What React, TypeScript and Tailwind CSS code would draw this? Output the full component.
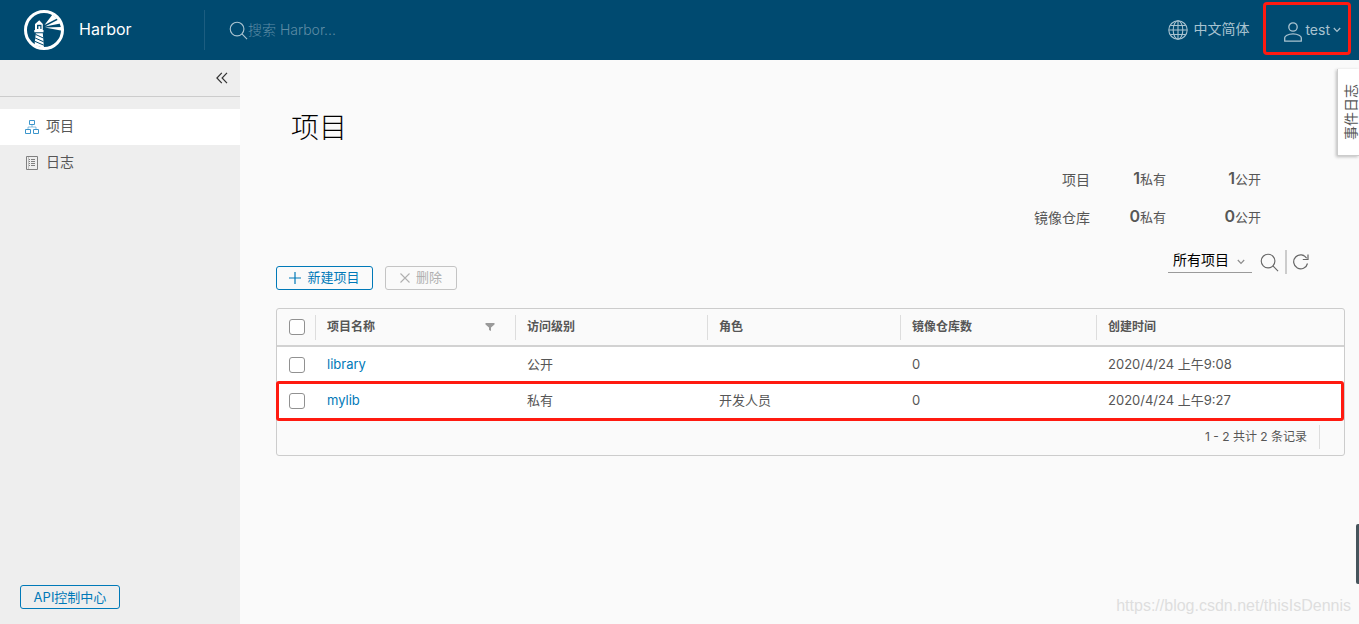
import { useState, type ReactNode } from "react";

type Project = { name: string; access: string; role: string; repos: number; created: string; marked?: boolean };

const projects: Project[] = [
  { name: "library", access: "公开", role: "", repos: 0, created: "2020/4/24 上午9:08" },
  { name: "mylib", access: "私有", role: "开发人员", repos: 0, created: "2020/4/24 上午9:27", marked: true },
];

const stats = [
  { label: "项目", priv: 1, pub: 1 },
  { label: "镜像仓库", priv: 0, pub: 0 },
];

const columns = [
  { label: "项目名称", width: "w-[200px]", filter: true },
  { label: "访问级别", width: "w-[192px]" },
  { label: "角色", width: "w-[193px]" },
  { label: "镜像仓库数", width: "w-[196px]" },
  { label: "创建时间", width: "" },
];

function Logo() {
  return (
    <svg width="40" height="40" viewBox="0 0 40 40" className="shrink-0">
      <circle cx="20" cy="20" r="18.5" fill="none" stroke="#fff" strokeWidth="3" />
      <path d="M15.300 10.200 11 14v6h-.7v2.200h9.200V20h-.700v-6z" fill="#fff" />
      <path d="M13 14.800h4.500v4.200H13z" fill="#004a70" />
      <path d="M14.400 16.200h1.900V19h-1.900z" fill="#fff" />
      <path d="M11.800 23.200h7L20 38l-9.500-3z" fill="#fff" />
      <path d="m11.500 24.400 7.800 3.600M11.200 28l8.400 3.800M11 31.400l8.800 3.800" stroke="#004a70" strokeWidth="1" />
      <path d="M20.500 15 28.500 4.500l4.500 4zM21 16.400 34.500 9.500l2 4zM21 17.600l17-.600v3.800z" fill="#fff" />
    </svg>
  );
}

function SearchIcon({ className }: { className?: string }) {
  return (
    <svg width="20" height="20" viewBox="0 0 20 20" fill="none" stroke="currentColor" strokeWidth="1.2" className={className}>
      <circle cx="8.5" cy="8.5" r="7.2" />
      <path d="m13.6 13.6 5.4 5.4" />
    </svg>
  );
}

function GlobeIcon() {
  return (
    <svg width="20" height="20" viewBox="0 0 20 20" fill="none" stroke="currentColor" strokeWidth="1.1">
      <circle cx="10" cy="10" r="9.2" />
      <ellipse cx="10" cy="10" rx="4.8" ry="9.2" />
      <path d="M10 1v18M1 10h18M2.5 5.5h15M2.5 14.5h15" />
    </svg>
  );
}

function UserIcon() {
  return (
    <svg width="20" height="20" viewBox="0 0 20 20" fill="none" stroke="currentColor" strokeWidth="1.3" className="mt-1">
      <circle cx="10" cy="5" r="4.2" />
      <path d="M1.7 19.2v-3.4c0-1.3 3.2-4 8.3-4s8.3 2.700 8.300 4v3.400z" strokeLinejoin="round" />
    </svg>
  );
}

function Chevron({ className }: { className?: string }) {
  return (
    <svg width="8" height="6" viewBox="0 0 8 6" fill="none" stroke="currentColor" strokeWidth="1.2" className={className}>
      <path d="m.8 1 3.200 3.400L7.200 1" />
    </svg>
  );
}

function OrgIcon() {
  return (
    <svg width="14" height="14" viewBox="0 0 14 14" fill="none" stroke="#3d96cc" strokeWidth="1">
      <path d="M4.500.5h5v4h-5zM.5 9.500h5v4h-5zM8.500 9.500h5v4h-5z" />
      <path d="M7 4.500v2.500M3 9.500V7h8v2.500" strokeOpacity=".6" />
    </svg>
  );
}

function LogIcon() {
  return (
    <svg width="14" height="14" viewBox="0 0 14 14" fill="none" stroke="#808080" strokeWidth="1">
      <path d="M1.500.5h11v13h-11z" />
      <path d="M3.500 1v12" strokeOpacity=".4" />
      <path d="M4 3.500h1M6 3.500h4M4 5.500h1M6 5.500h4M4 7.500h1M6 7.500h4M4 9.500h1M6 9.500h4" />
    </svg>
  );
}

function Check({ label }: { label: string }) {
  return (
    <input type="checkbox" aria-label={label}
      className="block w-4 h-4 ml-3 appearance-none rounded-[3px] border border-[#919191] bg-white checked:bg-[#0079b8]" />
  );
}

function NavItem({ icon, active, children }: { icon: ReactNode; active?: boolean; children: ReactNode }) {
  return (
    <a href="#" className={active ? "flex items-center gap-[7px] h-9 pl-[25px] bg-white" : "flex items-center gap-[7px] h-9 pl-[25px]"}>
      {icon}
      <span className="pb-[2px] text-sm">{children}</span>
    </a>
  );
}

export default function App() {
  const [q, setQ] = useState("");

  return (
    <div className="relative flex flex-col min-h-screen overflow-hidden bg-[#fafafa] text-[#565656] font-['Inter','Noto_Sans_CJK_SC',sans-serif]">
      <header className="flex items-center h-[60px] bg-[#004a70] text-[#a9c3d0]">
        <a href="#" className="flex items-center gap-[15px] w-[204px] pl-6 text-base text-white">
          <Logo />
          <span className="pb-[2px]">Harbor</span>
        </a>
        <label className="flex items-center flex-1 h-10 pl-6 border-l border-[#1c5d80]">
          <SearchIcon className="shrink-0 w-[19px] h-[19px]" />
          <input value={q} onChange={(e) => setQ(e.target.value)} placeholder="搜索 Harbor..." aria-label="搜索"
            className="w-full bg-transparent text-sm font-light outline-none placeholder:text-[#5e8ca5]" />
        </label>
        <button className="flex items-center gap-[5px] text-sm">
          <GlobeIcon /><span className="pb-[2px]">中文简体</span>
        </button>
        <button className="relative flex items-center gap-[2px] h-[60px] ml-[34px] pr-[18px] text-sm">
          <UserIcon />test<Chevron className="ml-[1px]" />
          <span className="absolute top-[2px] bottom-[5px] -left-5 right-2 border-3 border-[#ff1a10] rounded-[4px]" />
        </button>
      </header>

      <div className="flex flex-1">
        <nav className="flex flex-col w-60 shrink-0 bg-[#eee]">
          <div className="flex items-center justify-end h-[37px] pr-3 border-b border-[#ccc]">
            <button aria-label="收起">
              <svg width="12" height="12" viewBox="0 0 12 12" fill="none" stroke="#333" strokeWidth="1.2">
                <path d="M5.800.8.900 6l4.900 5.200M11 .8 6.100 6l4.900 5.200" />
              </svg>
            </button>
          </div>
          <div className="pt-3">
            <NavItem icon={<OrgIcon />} active>项目</NavItem>
            <NavItem icon={<LogIcon />}>日志</NavItem>
          </div>
          <button className="mt-auto mb-[15px] ml-5 w-[100px] h-6 border border-[#0079b8] rounded-[3px] text-[13px] leading-5 text-[#0079b8]">
            API控制中心
          </button>
        </nav>

        <main className="flex-1 min-w-0 pl-9 pr-[14px] pt-12">
          <h1 className="pl-[15px] text-[28px] leading-10 font-light text-black">项目</h1>

          <div className="flex flex-col items-end gap-[14px] mt-5 pr-[84px]">
            {stats.map((s) => (
              <div key={s.label} className="flex items-center h-6 text-right text-[13px]">
                <span className="text-sm">{s.label}</span>
                <span className="w-[76px] pb-1"><b className="text-base font-semibold">{s.priv}</b>私有</span>
                <span className="w-[95px] pb-1"><b className="text-base font-semibold">{s.pub}</b>公开</span>
              </div>
            ))}
          </div>

          <div className="flex items-end justify-between mt-5">
            <div className="flex gap-3 text-[13px]">
              <button className="flex items-center justify-center gap-[6px] w-[97px] h-6 border border-[#0079b8] rounded-[3px] text-[#0079b8]">
                <svg width="12" height="12" viewBox="0 0 12 12" stroke="currentColor" strokeWidth="1.2"><path d="M6 0v12M0 6h12" /></svg>
                新建项目
              </button>
              <button disabled className="flex items-center justify-center gap-[6px] w-[72px] h-6 border border-[#c4c4c4] rounded-[3px] text-[#b0b0b0]">
                <svg width="10" height="10" viewBox="0 0 10 10" stroke="currentColor" strokeWidth="1.1"><path d="m.5.5 9 9M9.500.5l-9 9" /></svg>
                删除
              </button>
            </div>
            <div className="flex items-center h-6 mb-4 pr-9">
              <div className="relative pb-[2px]">
                <select aria-label="项目范围" className="block w-[84px] h-6 pl-[5px] pb-[2px] appearance-none border-b border-[#9a9a9a] bg-transparent text-sm text-black outline-none">
                  <option>所有项目</option>
                </select>
                <Chevron className="absolute right-[7px] top-[10px] text-[#8c8c8c] pointer-events-none" />
              </div>
              <button aria-label="搜索" className="ml-2 text-[#666]"><SearchIcon className="w-[19px] h-[19px]" /></button>
              <span className="w-[2px] h-6 ml-[6px] bg-[#ccc]" />
              <button aria-label="刷新" className="ml-[6px]">
                <svg width="16" height="16" viewBox="0 0 16 16" fill="none" stroke="#666" strokeWidth="1.2">
                  <path d="M14.500 9.500A7 7 0 1 1 13.700 4.300" />
                  <path d="M15 .5v5H9.800" />
                </svg>
              </button>
            </div>
          </div>

          <div className="mt-[18px] border border-[#ccc] rounded-[3px]">
            <table className="w-full table-fixed border-separate border-spacing-0 text-left text-[13px]">
              <thead>
                <tr className="h-[38px]">
                  <th className="w-[38px] p-0 border-b-2 border-[#d2d2d2]"><Check label="全选" /></th>
                  {columns.map((c) => (
                    <th key={c.label} className={`${c.width} p-0 border-b-2 border-[#d2d2d2] text-xs font-bold`}>
                      <div className="flex items-center justify-between h-[25px] pl-[11px] pr-5 border-l border-[#ddd]">
                        {c.label}
                        {c.filter && (
                          <button aria-label="筛选">
                            <svg width="10" height="8" viewBox="0 0 10 8" fill="#9a9a9a"><path d="M.5 0h9v1.500L6 4.500V8L4 7V4.500L.5 1.500z" /></svg>
                          </button>
                        )}
                      </div>
                    </th>
                  ))}
                </tr>
              </thead>
              <tbody className="bg-white">
                {projects.map((p) => (
                  <tr key={p.name} className="relative h-9">
                    <td className="p-0">
                      <Check label={p.name} />
                      {p.marked && <span className="absolute -left-px right-0 -top-[2px] -bottom-[2px] border-3 border-[#ff1a10] rounded-[3px] pointer-events-none" />}
                    </td>
                    <td className="p-0 pl-3"><a href="#" className="text-[#0079b8]">{p.name}</a></td>
                    <td className="p-0 pl-3">{p.access}</td>
                    <td className="p-0 pl-3">{p.role}</td>
                    <td className="p-0 pl-3">{p.repos}</td>
                    <td className="p-0 pl-3">{p.created}</td>
                  </tr>
                ))}
              </tbody>
            </table>
            <div className="flex items-center justify-end h-9 pr-6 text-xs">
              <span className="flex items-center h-6 pr-3 border-r border-[#ddd]">1 - 2 共计 2 条记录</span>
            </div>
          </div>
        </main>
      </div>

      <button className="absolute right-0 top-[69px] flex items-center justify-end w-[22px] h-[87px] bg-white border-l border-b border-[#ccc] shadow-[-1px_1px_3px_#bbb] text-sm leading-4">
        <span className="[writing-mode:vertical-rl] [text-orientation:sideways] rotate-180">事件日志</span>
      </button>
      <span className="absolute right-0 bottom-10 w-[3px] h-[60px] rounded-l-[2px] bg-[#46545c]" />
      <span className="absolute right-2 bottom-[6px] text-base text-[#dedede] font-['Liberation_Sans',sans-serif]">https://blog.csdn.net/thisIsDennis</span>
    </div>
  );
}
